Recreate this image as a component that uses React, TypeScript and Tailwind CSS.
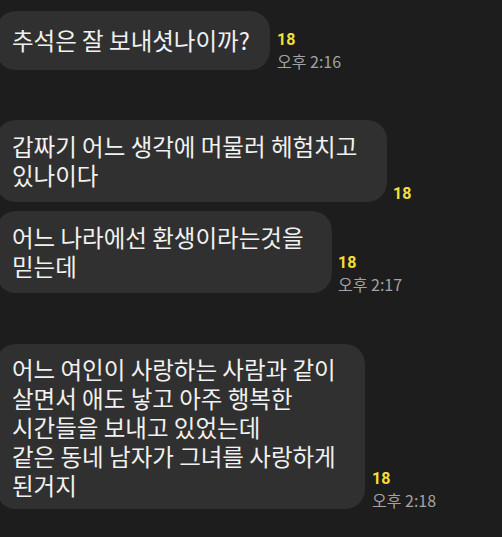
import React from "react";

const KR = { fontFamily: '"Noto Sans CJK KR", "Noto Sans", sans-serif' };

function Meta({ time }: { time?: string }) {
  return (
    <div className="flex flex-col items-start pb-0">
      <span
        className="text-[16px] font-bold leading-[16px] text-[#f3df3a]"
        style={{ fontFamily: 'Roboto, "Noto Sans", sans-serif' }}
      >
        18
      </span>
      {time && (
        <span className="mt-[4px] text-[16px] leading-[18px] text-[#a3a3a3] whitespace-nowrap" style={KR}>
          {time}
        </span>
      )}
    </div>
  );
}

function Bubble({
  lines,
  width,
  pad,
}: {
  lines: string[];
  width: string;
  pad: string;
}) {
  return (
    <div
      className={`-ml-1 rounded-[20px] bg-[#303030] pl-4 text-[23.5px] leading-[29px] text-[#f1f1f1] ${width} ${pad}`}
      style={KR}
    >
      {lines.map((l, i) => (
        <div key={i} className="whitespace-nowrap">
          {l}
        </div>
      ))}
    </div>
  );
}

export default function App() {
  return (
    <div className="h-[537px] w-[502px] overflow-hidden bg-[#1d1d1d] pt-[11px]">
      <div className="flex items-end gap-[7px]">
        <Bubble lines={["추석은 잘 보내셧나이까?"]} width="w-[274px]" pad="py-[15px]" />
        <Meta time="오후 2:16" />
      </div>
      <div className="mt-[50px] flex items-end gap-[6px]">
        <Bubble
          lines={["갑짜기 어느 생각에 머물러 헤험치고", "있나이다"]}
          width="w-[391px]"
          pad="py-[12px]"
        />
        <Meta />
      </div>
      <div className="mt-[9px] flex items-end gap-[6px]">
        <Bubble
          lines={["어느 나라에선 환생이라는것을", "믿는데"]}
          width="w-[336px]"
          pad="py-[12px]"
        />
        <Meta time="오후 2:17" />
      </div>
      <div className="mt-[51px] flex items-end gap-[7px]">
        <Bubble
          lines={[
            "어느 여인이 사랑하는 사람과 같이",
            "살면서 애도 낳고 아주 행복한",
            "시간들을 보내고 있었는데",
            "같은 동네 남자가 그녀를 사랑하게",
            "된거지",
          ]}
          width="w-[369px]"
          pad="pt-[11px] pb-[9px]"
        />
        <Meta time="오후 2:18" />
      </div>
    </div>
  );
}
